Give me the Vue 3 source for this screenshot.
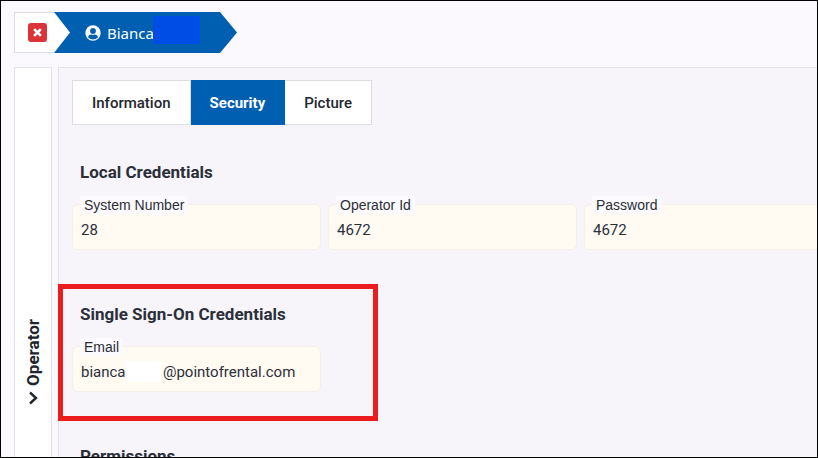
<script setup>
import { ref } from 'vue'

const tabs = ['Information', 'Security', 'Picture']
const active = ref('Security')
const local = ref([
  { id: 'system-number', label: 'System Number', value: '28' },
  { id: 'operator-id', label: 'Operator Id', value: '4672' },
  { id: 'password', label: 'Password', value: '4672' },
])
const email = ref('bianca.' + '\u00a0'.repeat(9) + '@pointofrental.com')
</script>

<template>
  <div class="page">
    <nav class="crumbs">
      <div class="crumb-close">
        <button type="button" class="close" aria-label="Close">
          <svg viewBox="0 0 18 18" width="19" height="19"><path d="M5.8 5.8l6.4 6.4M12.2 5.8l-6.4 6.4" stroke="#fff" stroke-width="2.6" /></svg>
        </button>
      </div>
      <a href="#" class="crumb">
        <svg viewBox="0 0 16 16" width="16" height="16">
          <circle cx="8" cy="8" r="7.7" fill="#fff" />
          <circle cx="8" cy="6" r="2.9" fill="#005fb0" />
          <path d="M3 12.3c.5-2 1.8-2.7 3.1-2.7.6.3 1.2.4 1.9.4s1.3-.1 1.9-.4c1.3 0 2.6.7 3.1 2.7a6.6 6.6 0 0 1-10 0z" fill="#005fb0" />
        </svg>
        <span>Bianca</span><span class="mask"></span>
      </a>
    </nav>

    <div class="body">
      <aside class="side">
        <button type="button" class="side-toggle">
          <span>Operator</span>
          <svg viewBox="0 0 12 14" width="12" height="14"><path d="M3 1.5l6 5.5-6 5.5" fill="none" stroke="#20242b" stroke-width="2.4" /></svg>
        </button>
      </aside>

      <main class="panel">
        <div class="tabs" role="tablist">
          <button v-for="t in tabs" :key="t" type="button" role="tab" class="tab" :class="{ on: t === active }" :aria-selected="t === active" @click="active = t">{{ t }}</button>
        </div>

        <section class="group">
          <h2>Local Credentials</h2>
          <div class="fields">
            <div v-for="f in local" :key="f.id" class="field">
              <label :for="f.id">{{ f.label }}</label>
              <input :id="f.id" v-model="f.value" type="text" />
            </div>
          </div>
        </section>

        <section class="group marked">
          <h2>Single Sign-On Credentials</h2>
          <div class="fields">
            <div class="field">
              <label for="email">Email</label>
              <input id="email" v-model="email" type="text" />
              <span class="redact"></span>
            </div>
          </div>
        </section>

        <section class="group">
          <h2>Permissions</h2>
        </section>
      </main>
    </div>
  </div>
</template>

<style>
body {
  background: #fbf9fd;
}
</style>

<style scoped>
.page {
  box-sizing: border-box;
  height: 100vh;
  border: 1px solid #000;
  padding: 11px 0 0 13px;
  display: flex;
  flex-direction: column;
  gap: 14px;
  overflow: hidden;
  background: #fbf9fd;
  color: #2b2f3a;
  font-family: Roboto, "Liberation Sans", sans-serif;
}
button {
  font-family: inherit;
  border: 0;
  padding: 0;
  cursor: pointer;
}
.crumbs {
  display: flex;
  flex: none;
  height: 41px;
  background: linear-gradient(#fff, #fff) 40px 0 / 20px 100% no-repeat;
}
.crumb-close {
  box-sizing: border-box;
  width: 40px;
  border: 1px solid #dddce2;
  border-right: 0;
  background: #fff;
  display: flex;
  align-items: center;
  padding-left: 13px;
}
.close {
  display: flex;
  border-radius: 3px;
  background: #dc3339;
}
.crumb {
  box-sizing: border-box;
  display: flex;
  align-items: center;
  width: 183px;
  padding-left: 31px;
  background: #005fb0;
  clip-path: polygon(0 0, calc(100% - 17px) 0, 100% 50%, calc(100% - 17px) 100%, 0 100%, 16px 50%);
  color: #fff;
  font: 15px "Noto Sans", sans-serif;
  text-decoration: none;
}
.crumb svg {
  margin-right: 6px;
}
.mask {
  width: 47px;
  height: 28px;
  margin: 0 0 6px -1px;
  background: #004de6;
}
.body {
  flex: 1;
  display: flex;
  gap: 6px;
  min-height: 0;
}
.side {
  box-sizing: border-box;
  flex: none;
  width: 38px;
  border: 1px solid #e2e1e6;
  border-bottom: 0;
  background: #fff;
  display: flex;
  flex-direction: column;
  justify-content: flex-end;
  align-items: center;
  padding-bottom: 52px;
}
.side-toggle {
  background: none;
  color: #20242b;
  font-size: 17px;
  font-weight: 700;
  line-height: 20px;
  display: flex;
  flex-direction: column;
  align-items: center;
  gap: 5px;
}
.side-toggle span {
  writing-mode: vertical-rl;
  transform: rotate(180deg);
}
.side-toggle svg {
  display: block;
}
.panel {
  flex: 1;
  min-width: 0;
  border: 1px solid #e2e1e6;
  border-right: 0;
  border-bottom: 0;
  background: #f7f5f9;
  padding: 12px 0 0 13px;
}
.tabs {
  display: flex;
}
.tab {
  height: 45px;
  padding: 0 19px;
  border: 1px solid #dddce1;
  background: #fff;
  color: #23262e;
  font-size: 15px;
  font-weight: 500;
}
.tab + .tab {
  border-left: 0;
}
.tab.on {
  border-color: #005fb0;
  background: #005fb0;
  color: #fff;
  font-weight: 700;
}
.group {
  position: relative;
  margin-top: 36px;
}
h2 {
  margin: 0 0 21px 8px;
  font-size: 17px;
  font-weight: 700;
  line-height: 22px;
}
.fields {
  display: grid;
  grid-template-columns: repeat(3, minmax(249px, 1fr));
  gap: 7px;
}
.field {
  position: relative;
}
.field input {
  box-sizing: border-box;
  display: block;
  width: 100%;
  height: 46px;
  padding: 6px 8px 0;
  border: 1px solid #f7ede9;
  border-radius: 6px;
  background: #fffbf3;
  color: #2b2f3a;
  font: 15px Roboto, sans-serif;
}
.field label {
  position: absolute;
  top: -8px;
  left: 8px;
  padding: 0 4px;
  border-radius: 3px;
  background: #fcfafc;
  font: 14px/18px "Liberation Sans", sans-serif;
}
.redact {
  position: absolute;
  top: 15px;
  left: 54px;
  width: 35px;
  height: 21px;
  background: #fff;
}
.marked {
  margin-top: 53px;
}
.marked::after {
  content: "";
  position: absolute;
  top: -19px;
  bottom: -29px;
  left: -14px;
  width: 310px;
  border: 5px solid #ea1c1e;
  pointer-events: none;
}
.marked + .group {
  margin-top: 53px;
}
</style>
